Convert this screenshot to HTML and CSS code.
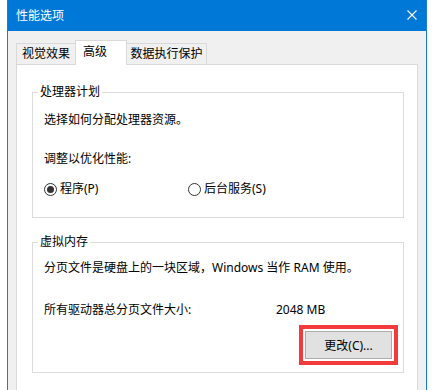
FILE: index.html
```html
<!DOCTYPE html>
<html lang="zh-CN">
<head>
	<meta charset="UTF-8">
	<title>性能选项</title>
	<link rel="stylesheet" href="styles.css">
</head>
<body>
	<div class="window">
		<div class="titlebar">
			<span class="title">性能选项</span>
			<svg class="close" width="10" height="10" viewBox="0 0 10 10">
				<path d="M0.5 0.5 L9.5 9.5 M9.5 0.5 L0.5 9.5" stroke="#fff" stroke-width="1.1" fill="none"/>
			</svg>
		</div>
		<div class="content">
			<div class="tabs">
				<div class="tab first">视觉效果</div>
				<div class="tab active">高级</div>
				<div class="tab last">数据执行保护</div>
			</div>
			<div class="panel">
				<fieldset class="group cpu">
					<legend>处理器计划</legend>
					<p class="line first-line">选择如何分配处理器资源。</p>
					<p class="line adjust">调整以优化性能:</p>
					<div class="radios">
						<label class="radio"><span class="dot checked"></span>程序(P)</label>
						<label class="radio"><span class="dot"></span>后台服务(S)</label>
					</div>
				</fieldset>
				<fieldset class="group memory">
					<legend>虚拟内存</legend>
					<p class="line mem-line">分页文件是硬盘上的一块区域，Windows 当作 RAM 使用。</p>
					<div class="line size-row">
						<span class="size-label">所有驱动器总分页文件大小:</span>
						<span class="size-value">2048 MB</span>
					</div>
					<div class="actions">
						<button class="btn">更改(C)...</button>
					</div>
				</fieldset>
			</div>
		</div>
	</div>
</body>
</html>
```

FILE: styles.css
```css
html, body {
	margin: 0;
	padding: 0;
	height: 390px;
	overflow: hidden;
	background-color: #fff;
}

body {
	font-size: 12px;
	font-family: "Noto Sans", "Noto Sans CJK SC", sans-serif;
	color: #000;
}

p {
	margin: 0;
}

.window {
	width: 418px;
	height: 390px;
	margin-left: 7px;
	border-left: 1px solid #1a7fd4;
	border-right: 1px solid #1a7fd4;
	background-color: #f0f0f0;
}

.titlebar {
	height: 31px;
	background-color: #0078d7;
	display: flex;
	align-items: center;
	justify-content: space-between;
	padding: 0 9px 0 8px;
}

.title {
	color: #fff;
	line-height: 31px;
}

.close {
	display: block;
	margin-top: -1px;
}

.content {
	padding: 9px 8px 0 8px;
}

.tabs {
	display: flex;
	align-items: flex-end;
	height: 24px;
}

.tab {
	height: 20px;
	line-height: 19px;
	border-top: 1px solid #d9d9d9;
	text-align: center;
	background-color: #f0f0f0;
}

.tab.first {
	width: 58px;
	border-left: 1px solid #d9d9d9;
}

.tab.last {
	width: 79px;
	border-right: 1px solid #d9d9d9;
}

.tab.active {
	position: relative;
	z-index: 1;
	width: 43px;
	height: 24px;
	line-height: 21px;
	padding-left: 7px;
	text-align: left;
	margin-bottom: -1px;
	border-left: 1px solid #d9d9d9;
	border-right: 1px solid #d9d9d9;
	background-color: #fff;
}

.panel {
	height: 306px;
	border: 1px solid #d9d9d9;
	border-bottom: 0;
	background-color: #fff;
	padding: 19px 13px 0 15px;
}

.group {
	margin: 0;
	min-width: 0;
	border: 1px solid #dcdcdc;
	padding: 0 11px 20px 11px;
}

.group legend {
	padding: 0 2px;
	margin-left: -6px;
	line-height: 16px;
}

.group.memory {
	margin-top: 16px;
	padding-bottom: 13px;
}

.line {
	line-height: 16px;
}

.first-line {
	margin-top: 12px;
}

.adjust {
	margin-top: 23px;
}

.radios {
	display: flex;
	margin-top: 14px;
	line-height: 16px;
}

.radio {
	display: flex;
	align-items: center;
	gap: 3px;
}

.radio:first-child {
	width: 144px;
}

.dot {
	width: 11px;
	height: 11px;
	border: 1px solid #333;
	border-radius: 50%;
	display: flex;
	align-items: center;
	justify-content: center;
}

.dot.checked::after {
	content: "";
	width: 7px;
	height: 7px;
	border-radius: 50%;
	background-color: #333;
}

.mem-line {
	margin-top: 10px;
}

.size-row {
	display: flex;
	margin-top: 26px;
}

.size-label {
	width: 232px;
}

.actions {
	display: flex;
	justify-content: flex-end;
	margin-top: 13px;
}

.btn {
	width: 87px;
	height: 28px;
	padding: 0;
	font: inherit;
	color: #000;
	background-color: #e1e1e1;
	border: 1px solid #adadad;
	outline: 4px solid #f23b3b;
	outline-offset: 2px;
}
```
